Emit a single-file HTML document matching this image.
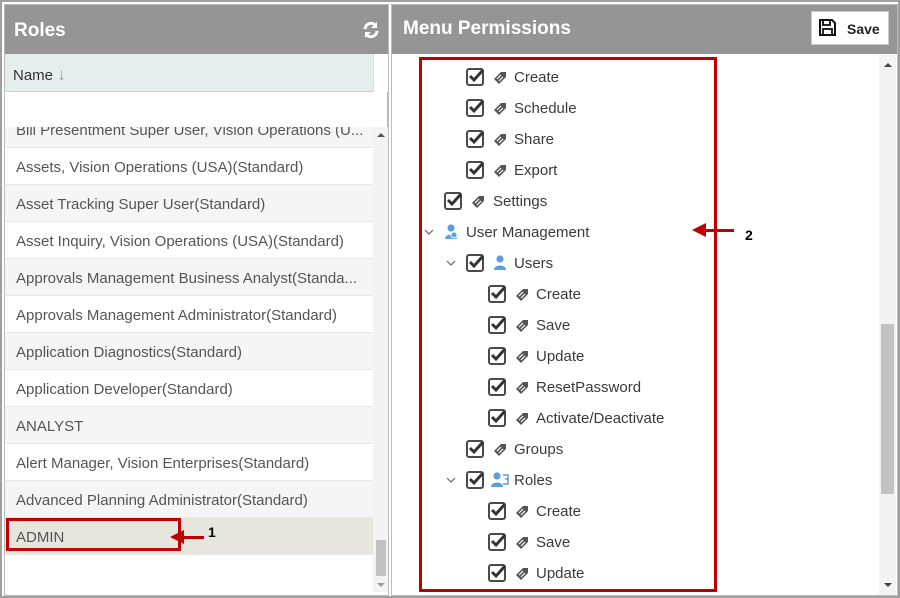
<!DOCTYPE html>
<html><head><style>
*{box-sizing:border-box;margin:0;padding:0}
body{width:900px;height:598px;background:#fff;font-family:"Liberation Sans",Arial,sans-serif;position:relative;overflow:hidden}
.a{position:absolute}
.hdr{background:#959595;color:#fff;font-weight:bold;font-size:19px}
.row{position:absolute;left:5px;width:368px;height:37px;border-bottom:1px solid #e4e8e8;font-size:15px;color:#555;line-height:39px;padding-left:11px;white-space:nowrap;overflow:hidden}
.t{position:absolute;font-size:15px;color:#3a3a3a;line-height:20px;white-space:nowrap}
svg{position:absolute}
</style></head><body>
<div class="a" style="left:0;top:0;width:900px;height:598px;border:2px solid #a0a0a0"></div>
<div class="a" style="top:4px;left:4px;width:385px;height:592px;border:1px solid #bbb"></div>
<div class="a hdr" style="left:5px;top:5px;width:383px;height:49px;line-height:51px;padding-left:9px">Roles</div>
<svg style="left:362px;top:21px" width="18" height="18" viewBox="0 0 18 18"><path d="M3 8a6 6 0 0 1 11-3" stroke="#fff" stroke-width="3" fill="none"/><path d="M15 1v6h-6z" fill="#fff"/><path d="M15 10a6 6 0 0 1-11 3" stroke="#fff" stroke-width="3" fill="none"/><path d="M3 17v-6h6z" fill="#fff"/></svg>
<div class="a" style="left:5px;top:54px;width:368px;height:38px;background:#e5eded;border-bottom:1px solid #d0d0d0;font-size:15px;color:#333;line-height:41px;padding-left:8px">Name <span style="color:#999;font-size:17px">&#8595;</span></div>
<div class="a" style="left:373px;top:54px;width:15px;height:73px;background:#fff;border-left:1px solid #ddd"></div>
<div class="a" style="left:5px;top:92px;width:383px;height:35px;background:#fff;border-right:1px solid #9dbce8"></div>
<div class="a" style="left:5px;top:127px;width:368px;height:465px;overflow:hidden">
<div class="row" style="left:0;top:-16px;background:#f5f5f5">Bill Presentment Super User, Vision Operations (U...</div>
<div class="row" style="left:0;top:21px">Assets, Vision Operations (USA)(Standard)</div>
<div class="row" style="left:0;top:58px;background:#f5f5f5">Asset Tracking Super User(Standard)</div>
<div class="row" style="left:0;top:95px">Asset Inquiry, Vision Operations (USA)(Standard)</div>
<div class="row" style="left:0;top:132px;background:#f5f5f5">Approvals Management Business Analyst(Standa...</div>
<div class="row" style="left:0;top:169px">Approvals Management Administrator(Standard)</div>
<div class="row" style="left:0;top:206px;background:#f5f5f5">Application Diagnostics(Standard)</div>
<div class="row" style="left:0;top:243px">Application Developer(Standard)</div>
<div class="row" style="left:0;top:280px;background:#f5f5f5">ANALYST</div>
<div class="row" style="left:0;top:317px">Alert Manager, Vision Enterprises(Standard)</div>
<div class="row" style="left:0;top:354px;background:#f5f5f5">Advanced Planning Administrator(Standard)</div>
<div class="row" style="left:0;top:391px;background:#e6e6df">ADMIN</div>
</div>
<div class="a" style="left:373px;top:127px;width:15px;height:465px;background:#f3f3f3"></div>
<div class="a" style="left:376px;top:540px;width:10px;height:36px;background:#c2c2c2"></div>
<div class="a" style="left:377px;top:133px;width:0;height:0;border:4px solid transparent;border-bottom-color:#555;border-top:0"></div>
<div class="a" style="left:377px;top:583px;width:0;height:0;border:4px solid transparent;border-top-color:#999;border-bottom:0"></div>
<div class="a" style="left:6px;top:518px;width:175px;height:33px;border:3px solid #c00000"></div>
<div class="a" style="left:180px;top:536px;width:24px;height:3px;background:#c00000"></div>
<div class="a" style="left:170px;top:530px;width:0;height:0;border-top:7px solid transparent;border-bottom:7px solid transparent;border-right:14px solid #c00000"></div>
<div class="a" style="left:208px;top:524px;font-size:14px;font-weight:bold;color:#000">1</div>

<div class="a" style="left:391px;top:4px;width:507px;height:592px;border:1px solid #bbb"></div>
<div class="a hdr" style="left:392px;top:5px;width:505px;height:49px;line-height:47px;padding-left:11px">Menu Permissions</div>
<div class="a" style="left:811px;top:11px;width:78px;height:34px;background:#fff;border:1px solid #ccc;font-size:14px;font-weight:bold;color:#222;line-height:34px;padding-left:35px">Save</div>
<svg style="left:819px;top:19px" width="17" height="17" viewBox="0 0 17 17"><path d="M1 1h12l3 3v12H1z" fill="none" stroke="#111" stroke-width="2"/><rect x="4" y="1" width="7" height="5" fill="none" stroke="#111" stroke-width="1.8"/><rect x="4" y="10" width="9" height="6" fill="none" stroke="#111" stroke-width="1.8"/></svg>
<div class="a" style="left:879px;top:55px;width:17px;height:540px;background:#f3f3f3"></div>
<div class="a" style="left:881px;top:324px;width:13px;height:170px;background:#c2c2c2"></div>
<div class="a" style="left:884px;top:63px;width:0;height:0;border:4px solid transparent;border-bottom-color:#444;border-top:0"></div>
<div class="a" style="left:884px;top:583px;width:0;height:0;border:4px solid transparent;border-top-color:#444;border-bottom:0"></div>

<svg width="900" height="598" style="left:0;top:0">
<defs>
<g id="cb"><rect x="1" y="1" width="16" height="16" rx="2" fill="none" stroke="#4a4a4a" stroke-width="2"/><path d="M4 8l4 4l9-10" fill="none" stroke="#333" stroke-width="3"/></g>
<g id="tg"><path d="M1 9l7-7h5v5l-7 7z" fill="#555"/><path d="M4 9l4-4M6 11l4-4" stroke="#fff" stroke-width="1.2"/></g>
<g id="us"><circle cx="7" cy="4" r="3.6" fill="#5a9fe0"/><path d="M1 15c0-6 12-6 12 0z" fill="#5a9fe0"/></g>
<path id="ch" d="M0 0l4 4l4-4" fill="none" stroke="#666" stroke-width="1.2"/>
</defs>
<g>
<use href="#cb" x="466" y="68"/><use href="#tg" x="493" y="70"/>
<use href="#cb" x="466" y="99"/><use href="#tg" x="493" y="101"/>
<use href="#cb" x="466" y="130"/><use href="#tg" x="493" y="132"/>
<use href="#cb" x="466" y="161"/><use href="#tg" x="493" y="163"/>
<use href="#cb" x="444" y="192"/><use href="#tg" x="471" y="194"/>
<use href="#ch" x="425" y="230"/><use href="#us" x="444" y="224"/><circle cx="454" cy="235" r="3" fill="#5a9fe0" stroke="#fff"/>
<use href="#ch" x="447" y="261"/><use href="#cb" x="466" y="254"/><use href="#us" x="493" y="255"/>
<use href="#cb" x="488" y="285"/><use href="#tg" x="515" y="287"/>
<use href="#cb" x="488" y="316"/><use href="#tg" x="515" y="318"/>
<use href="#cb" x="488" y="347"/><use href="#tg" x="515" y="349"/>
<use href="#cb" x="488" y="378"/><use href="#tg" x="515" y="380"/>
<use href="#cb" x="488" y="409"/><use href="#tg" x="515" y="411"/>
<use href="#cb" x="466" y="440"/><use href="#tg" x="493" y="442"/>
<use href="#ch" x="447" y="478"/><use href="#cb" x="466" y="471"/><use href="#us" x="490" y="472"/><path d="M503 475h5v9h-5M505 479h3" stroke="#5a9fe0" stroke-width="1.5" fill="none"/>
<use href="#cb" x="488" y="502"/><use href="#tg" x="515" y="504"/>
<use href="#cb" x="488" y="533"/><use href="#tg" x="515" y="535"/>
<use href="#cb" x="488" y="564"/><use href="#tg" x="515" y="566"/>
</g>
<rect x="420.5" y="58.5" width="295" height="532" fill="none" stroke="#c00000" stroke-width="3"/>
<rect x="704" y="229" width="30" height="3" fill="#c00000"/><path d="M692 230l14-7v14z" fill="#c00000"/>
<text x="745" y="240" font-family="Liberation Sans" font-size="14" font-weight="bold">2</text>
</svg>
<div class="t" style="left:514px;top:68px">Create</div>
<div class="t" style="left:514px;top:99px">Schedule</div>
<div class="t" style="left:514px;top:130px">Share</div>
<div class="t" style="left:514px;top:161px">Export</div>
<div class="t" style="left:493px;top:192px">Settings</div>
<div class="t" style="left:466px;top:223px">User Management</div>
<div class="t" style="left:514px;top:254px">Users</div>
<div class="t" style="left:536px;top:285px">Create</div>
<div class="t" style="left:536px;top:316px">Save</div>
<div class="t" style="left:536px;top:347px">Update</div>
<div class="t" style="left:536px;top:378px">ResetPassword</div>
<div class="t" style="left:536px;top:409px">Activate/Deactivate</div>
<div class="t" style="left:514px;top:440px">Groups</div>
<div class="t" style="left:514px;top:471px">Roles</div>
<div class="t" style="left:536px;top:502px">Create</div>
<div class="t" style="left:536px;top:533px">Save</div>
<div class="t" style="left:536px;top:564px">Update</div>
</body></html>
